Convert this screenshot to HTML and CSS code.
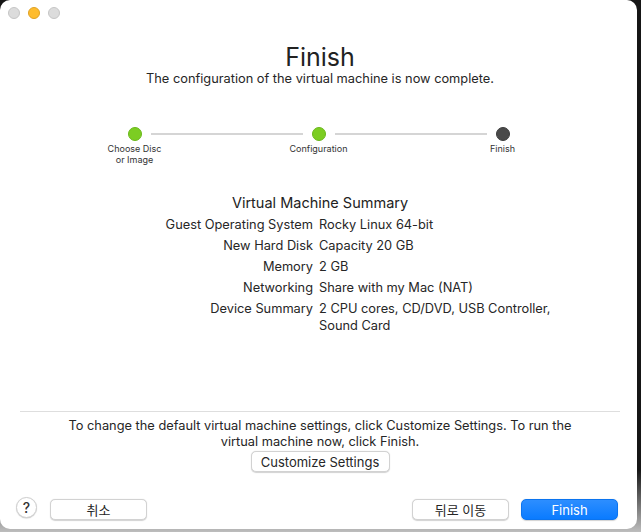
FILE: index.html
```html
<!DOCTYPE html>
<html lang="en">
<head>
<meta charset="utf-8">
<title>Finish</title>
<link rel="stylesheet" href="styles.css">
</head>
<body>
<div class="window">
  <div class="titlebar">
    <span class="light"></span>
    <span class="light light-yellow"></span>
    <span class="light"></span>
  </div>

  <main class="content">
    <h1 class="title">Finish</h1>
    <p class="subtitle">The configuration of the virtual machine is now complete.</p>

    <div class="stepper">
      <div class="step">
        <span class="dot dot-done"></span>
        <span class="step-label">Choose Disc<br>or Image</span>
      </div>
      <span class="step-line"></span>
      <div class="step">
        <span class="dot dot-done"></span>
        <span class="step-label">Configuration</span>
      </div>
      <span class="step-line"></span>
      <div class="step">
        <span class="dot dot-current"></span>
        <span class="step-label">Finish</span>
      </div>
    </div>

    <section class="summary">
      <h2 class="summary-title">Virtual Machine Summary</h2>
      <dl class="summary-grid">
        <dt>Guest Operating System</dt><dd>Rocky Linux 64-bit</dd>
        <dt>New Hard Disk</dt><dd>Capacity 20 GB</dd>
        <dt>Memory</dt><dd>2 GB</dd>
        <dt>Networking</dt><dd>Share with my Mac (NAT)</dd>
        <dt>Device Summary</dt><dd>2 CPU cores, CD/DVD, USB Controller, Sound Card</dd>
      </dl>
    </section>
  </main>

  <div class="customize">
    <p class="customize-text">To change the default virtual machine settings, click Customize Settings. To run the virtual machine now, click Finish.</p>
    <button class="btn btn-customize">Customize Settings</button>
  </div>

  <div class="actions">
    <button class="help">?</button>
    <button class="btn btn-action">취소</button>
    <span class="spacer"></span>
    <button class="btn btn-action">뒤로 이동</button>
    <button class="btn btn-action btn-primary">Finish</button>
  </div>
</div>
</body>
</html>
```

FILE: styles.css
```css
* { box-sizing: border-box; }

html, body {
  margin: 0;
  height: 100%;
}

body {
  background: linear-gradient(#161616 0, #161616 470px, #bdbdbd 532px);
  font-family: "Inter", "Liberation Sans", "Noto Sans CJK KR", sans-serif;
  color: #262626;
  overflow: hidden;
}

.window {
  width: 637px;
  height: 529px;
  background: #ffffff;
  border-radius: 10px;
  display: flex;
  flex-direction: column;
}

.titlebar {
  height: 26px;
  flex: none;
  display: flex;
  align-items: center;
  gap: 8px;
  padding-left: 8px;
}

.light {
  width: 12px;
  height: 12px;
  border-radius: 50%;
  background: #dcdcdc;
  border: 1px solid #c6c6c6;
}

.light-yellow {
  background: #febc2e;
  border-color: #e0a223;
}

.content {
  flex: 1;
  display: flex;
  flex-direction: column;
  align-items: center;
  padding-left: 3px;
}

.title {
  margin: 17px 0 0;
  font-size: 25px;
  line-height: 28px;
  font-weight: 400;
  color: #222;
}

.subtitle {
  margin: 0;
  font-size: 12.8px;
  line-height: 16px;
}

.stepper {
  margin-top: 40px;
  display: flex;
  align-items: flex-start;
  padding-right: 3px;
}

.step {
  width: 14px;
  display: flex;
  flex-direction: column;
  align-items: center;
}

.dot {
  width: 14px;
  height: 14px;
  border-radius: 50%;
}

.dot-done {
  background: #7ccd22;
  border: 1px solid #6ab81a;
}

.dot-current {
  background: #4a4a4a;
  border: 1px solid #3c3c3c;
}

.step-label {
  margin-top: 2px;
  font-size: 9px;
  line-height: 11px;
  text-align: center;
  white-space: nowrap;
  color: #333;
}

.step-line {
  width: 152px;
  height: 2px;
  margin: 6px 9px 0;
  background: #d5d5d5;
}

.summary {
  margin-top: 29px;
  width: 100%;
  display: flex;
  flex-direction: column;
  align-items: center;
}

.summary-title {
  margin: 0;
  font-size: 14.5px;
  line-height: 18px;
  font-weight: 400;
  color: #222;
}

.summary-grid {
  margin: 4px 0 0;
  width: 100%;
  padding-right: 8px;
  display: grid;
  grid-template-columns: 1fr 1fr;
  column-gap: 6px;
  row-gap: 4px;
  font-size: 12.8px;
  line-height: 17px;
}

.summary-grid dt {
  text-align: right;
}

.summary-grid dd {
  margin: 0;
  max-width: 236px;
}

.customize {
  flex: none;
  margin: 0 17px 0 20px;
  border-top: 1px solid #dedede;
  display: flex;
  flex-direction: column;
  align-items: center;
  padding-top: 6px;
}

.customize-text {
  margin: 0;
  width: 520px;
  text-align: center;
  font-size: 12.8px;
  line-height: 16px;
}

.btn {
  font-family: inherit;
  font-size: 13px;
  color: #262626;
  background: #ffffff;
  border: 1px solid #d2d2d2;
  border-radius: 5px;
  box-shadow: 0 0.5px 1px rgba(0, 0, 0, 0.18);
  padding: 0;
}

.btn-customize {
  margin-top: 1px;
  margin-bottom: 2px;
  width: 139px;
  height: 21px;
}

.actions {
  flex: none;
  height: 55px;
  display: flex;
  align-items: center;
  padding: 16px 19px 0 16px;
}

.help {
  width: 21px;
  height: 21px;
  border-radius: 50%;
  background: #fff;
  border: 1px solid #cfcfcf;
  box-shadow: 0 0.5px 1px rgba(0, 0, 0, 0.2);
  font-family: inherit;
  font-size: 14px;
  font-weight: 500;
  color: #333;
  padding: 0;
  margin-top: -5px;
}

.btn-action {
  width: 97px;
  height: 21px;
}

.actions .help + .btn-action {
  margin-left: 13px;
}

.spacer {
  flex: 1;
}

.btn-action + .btn-action {
  margin-left: 12px;
}

.btn-primary {
  color: #fff;
  background: linear-gradient(#2d8eff, #0a7bff);
  border-color: #0b74ef;
}
```
